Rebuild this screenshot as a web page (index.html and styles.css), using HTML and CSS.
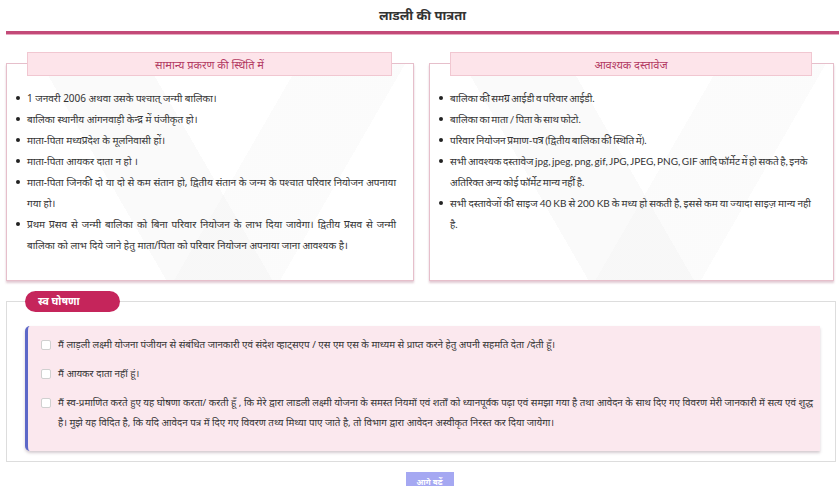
FILE: index.html
```html
<!DOCTYPE html>
<html lang="hi">
<head>
<meta charset="utf-8">
<title>लाडली की पात्रता</title>
<link rel="stylesheet" href="styles.css">
</head>
<body>
<div class="page">
  <h2 class="title">लाडली की पात्रता</h2>
  <div class="rule"></div>

  <div class="cards">
    <div class="card">
      <div class="card-head">सामान्य प्रकरण की स्थिति में</div>
      <ul class="list">
        <li>1 जनवरी 2006 अथवा उसके पश्चात् जन्मी बालिका।</li>
        <li>बालिका स्थानीय आंगनवाड़ी केन्द्र में पंजीकृत हो।</li>
        <li>माता-पिता मध्यप्रदेश के मूलनिवासी हों।</li>
        <li>माता-पिता आयकर दाता न हो ।</li>
        <li>माता-पिता जिनकी दो या दो से कम संतान हो, द्वितीय संतान के जन्म के पश्चात परिवार नियोजन अपनाया गया हो।</li>
        <li>प्रथम प्रसव से जन्मी बालिका को बिना परिवार नियोजन के लाभ दिया जावेगा। द्वितीय प्रसव से जन्मी बालिका को लाभ दिये जाने हेतु माता/पिता को परिवार नियोजन अपनाया जाना आवश्यक है।</li>
      </ul>
    </div>
    <div class="card">
      <div class="card-head">आवश्यक दस्तावेज</div>
      <ul class="list list-docs">
        <li>बालिका की समग्र आईडी व परिवार आईडी.</li>
        <li>बालिका का माता / पिता के साथ फोटो.</li>
        <li>परिवार नियोजन प्रमाण-पत्र (द्वितीय बालिका की स्थिति में).</li>
        <li>सभी आवश्यक दस्तावेज jpg, jpeg, png, gif, JPG, JPEG, PNG, GIF आदि फॉर्मेट में हो सकते है, इनके अतिरिक्त अन्य कोई फॉर्मेट मान्य नहीं है.</li>
        <li class="li-plain">सभी दस्तावेजों की साइज 40 KB से 200 KB के मध्य हो सकती है, इससे कम या ज्यादा साइज़ मान्य नही है.</li>
      </ul>
    </div>
  </div>

  <fieldset class="decl">
    <legend class="badge">स्व घोषणा</legend>
    <div class="decl-box">
      <label class="row"><input type="checkbox" class="chk"><span>मैं लाड़ली लक्ष्मी योजना पंजीयन से संबंधित जानकारी एवं संदेश व्हाट्सएप / एस एम एस के माध्यम से प्राप्त करने हेतु अपनी सहमति देता /देती हूँ।</span></label>
      <label class="row"><input type="checkbox" class="chk"><span>मैं आयकर दाता नहीं हूं।</span></label>
      <label class="row"><input type="checkbox" class="chk"><span>मैं स्व-प्रमाणित करते हुए यह घोषणा करता/ करती हूँ , कि मेरे द्वारा लाडली लक्ष्मी योजना के समस्त नियमों एवं शर्तों को ध्यानपूर्वक पढ़ा एवं समझा गया है तथा आवेदन के साथ दिए गए विवरण मेरी जानकारी में सत्य एवं शुद्ध है। मुझे यह विदित है, कि यदि आवेदन पत्र में दिए गए विवरण तथ्य मिथ्या पाए जाते है, तो विभाग द्वारा आवेदन अस्वीकृत निरस्त कर दिया जायेगा।</span></label>
    </div>
  </fieldset>

  <div class="actions">
    <button class="next" type="button">आगे बढ़ें</button>
  </div>
</div>
</body>
</html>
```

FILE: styles.css
```css
* { box-sizing: border-box; }

body {
  margin: 0;
  background: #ffffff;
  font-family: "Noto Sans", "Liberation Sans", sans-serif;
  color: #333333;
}

.page {
  padding: 5px 0 0 6px;
}

.title {
  margin: 0;
  height: 20px;
  line-height: 20px;
  text-align: center;
  font-size: 13px;
  font-weight: bold;
  color: #333333;
}

.rule {
  margin-top: 6px;
  height: 3px;
  background: #c34a78;
  box-shadow: 0 1px 0 #e7a9bf;
}

.cards {
  display: grid;
  grid-template-columns: 408px 405px;
  column-gap: 15px;
  margin-top: 18px;
}

.card {
  margin-top: 11px;
  border: 1px solid #e6bfcb;
  box-shadow: 0 2px 2px rgba(190, 140, 160, 0.45);
  background:
    linear-gradient(120deg, rgba(0,0,0,0) 55%, rgba(240,240,240,0.25) 55%, rgba(240,240,240,0.25) 75%, rgba(0,0,0,0) 75%),
    linear-gradient(60deg, #ffffff 30%, #fafafa 30%, #fafafa 50%, #ffffff 50%);
  padding: 0 17px 24px 20px;
}

.card-head {
  margin: -12px 4px 0 0;
  height: 24px;
  line-height: 24px;
  background: #fde4ea;
  border: 1px solid #f1c7d1;
  text-align: center;
  font-size: 11px;
  color: #b33a62;
}

.list {
  margin: 12px 0 0 0;
  padding: 0;
  list-style: none;
}

.list li {
  position: relative;
  font-size: 10px;
  line-height: 21px;
  text-align: justify;
  color: #333333;
}

.list-docs {
  margin-right: -4px;
}

.list-docs li {
  font-family: "Lato", "Noto Sans", sans-serif;
  text-align: left;
  word-spacing: -1px;
}

.list-docs li.li-plain {
  word-spacing: -0.5px;
}

.list li::before {
  content: "";
  position: absolute;
  left: -11px;
  top: 8px;
  width: 4px;
  height: 4px;
  border-radius: 50%;
  background: #222222;
}

.decl {
  margin: 10px 3px 0 0;
  padding: 0 15px 10px 18px;
  border: 1px solid #dddddd;
  min-width: 0;
}

.badge {
  margin-left: 0;
  padding: 0 0 0 13px;
  width: 95px;
  height: 21px;
  line-height: 21px;
  border-radius: 11px;
  background: #c5255b;
  color: #ffffff;
  font-size: 10.5px;
  font-weight: bold;
}

.decl-box {
  margin-top: 14px;
  background: #fbe8ee;
  border-left: 3px solid #5d68c8;
  border-top-left-radius: 5px;
  border-bottom-left-radius: 5px;
  box-shadow: 0 2px 3px rgba(160, 140, 150, 0.45);
  padding: 9px 3px 18px 13px;
  display: flex;
  flex-direction: column;
  gap: 9px;
}

.row {
  display: flex;
  align-items: flex-start;
  gap: 7px;
  font-size: 9.8px;
  line-height: 20px;
  color: #333333;
}

.chk {
  appearance: none;
  -webkit-appearance: none;
  flex: none;
  margin: 5px 0 0 0;
  width: 10px;
  height: 10px;
  border: 1px solid #d0d0d0;
  border-radius: 2px;
  background: #ffffff;
}

.actions {
  display: flex;
  justify-content: center;
  margin-top: 10px;
}

.next {
  margin-left: 14px;
  border: none;
  background: #a5a8f2;
  color: #ffffff;
  font-family: inherit;
  font-size: 8px;
  font-weight: bold;
  width: 48px;
  height: 20px;
  padding: 0;
  line-height: 14px;
  text-align: center;
  align-self: flex-start;
}
```
